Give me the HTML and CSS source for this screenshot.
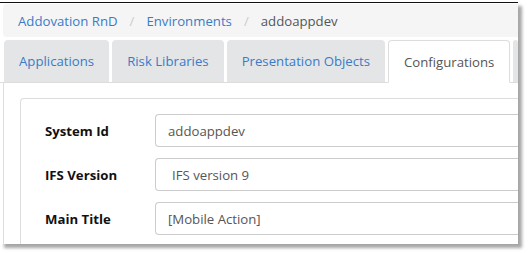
FILE: index.html
```html
<!DOCTYPE html>
<html>
<head>
<meta charset="utf-8">
<link rel="stylesheet" href="styles.css">
</head>
<body>
<div class="shot">
  <nav class="crumbs">
    <a class="crumb-link">Addovation RnD</a>
    <span class="sep">/</span>
    <a class="crumb-link">Environments</a>
    <span class="sep">/</span>
    <span class="crumb-current">addoappdev</span>
  </nav>
  <ul class="tabs">
    <li class="tab">Applications</li>
    <li class="tab">Risk Libraries</li>
    <li class="tab">Presentation Objects</li>
    <li class="tab active">Configurations</li>
    <li class="tab stub"></li>
  </ul>
  <div class="panel">
    <div class="card">
      <div class="row">
        <label class="lbl">System Id</label>
        <div class="field">addoappdev</div>
      </div>
      <div class="row">
        <label class="lbl">IFS Version</label>
        <div class="field sel">IFS version 9</div>
      </div>
      <div class="row">
        <label class="lbl">Main Title</label>
        <div class="field">[Mobile Action]</div>
      </div>
      <div class="next"></div>
    </div>
  </div>
</div>
</body>
</html>
```
FILE: styles.css
```css
html, body {
  margin: 0;
  padding: 0;
  background: #fff;
}
body {
  width: 528px;
  height: 253px;
  overflow: hidden;
  font-family: "Open Sans", "Noto Sans", sans-serif;
  font-size: 13.2px;
}
.shot {
  margin-top: 2px;
  width: 518px;
  height: 242px;
  border-top: 1.5px solid #111;
  background: #fff;
  box-shadow: 4px 4px 3px rgba(0,0,0,0.35);
  overflow: hidden;
  box-sizing: border-box;
}
.crumbs {
  margin: 1px 0 0 3px;
  height: 33px;
  background: #f5f5f5;
  border-radius: 4px 0 0 4px;
  display: flex;
  align-items: center;
  padding-left: 15px;
  color: #555;
}
.crumb-link {
  color: #3a7bc8;
}
.sep {
  color: #ccc;
  padding: 0 12px;
}
.crumb-current {
  color: #555;
}
.tabs {
  list-style: none;
  margin: 3px 0 0 0;
  padding: 0 0 0 4px;
  display: flex;
  gap: 3px;
  height: 42px;
  border-bottom: 1px solid #ddd;
}
.tab {
  height: 42px;
  box-sizing: border-box;
  padding: 0 15px;
  display: flex;
  align-items: center;
  background: #e4e5e7;
  color: #3a7bc8;
  border-radius: 4px 4px 0 0;
  white-space: nowrap;
}
.tab.active {
  background: #fff;
  color: #555;
  border: 1px solid #ddd;
  border-bottom-color: #fff;
  height: 43px;
  padding: 0 15px;
}
.tab.stub {
  padding: 0;
  width: 10px;
}
.panel {
  margin-left: 3px;
  border-left: 1px solid #ddd;
  padding: 15px 0 0 16px;
}
.card {
  border: 1px solid #ddd;
  border-right: none;
  border-radius: 4px 0 0 0;
  padding: 15px 0 0 24px;
  height: 200px;
}
.row {
  display: flex;
  align-items: center;
  margin-bottom: 11px;
}
.lbl {
  width: 110px;
  font-weight: 700;
  color: #111;
}
.field {
  flex: 1;
  height: 33px;
  box-sizing: border-box;
  border: 1px solid #ccc;
  border-right: none;
  border-radius: 4px 0 0 4px;
  padding: 0 12px;
  display: flex;
  align-items: center;
  color: #555;
}
.field.sel {
  padding-left: 16px;
}
.next {
  margin-left: -24px;
  height: 8px;
  background: linear-gradient(#fff, #eef3fa);
}
```
